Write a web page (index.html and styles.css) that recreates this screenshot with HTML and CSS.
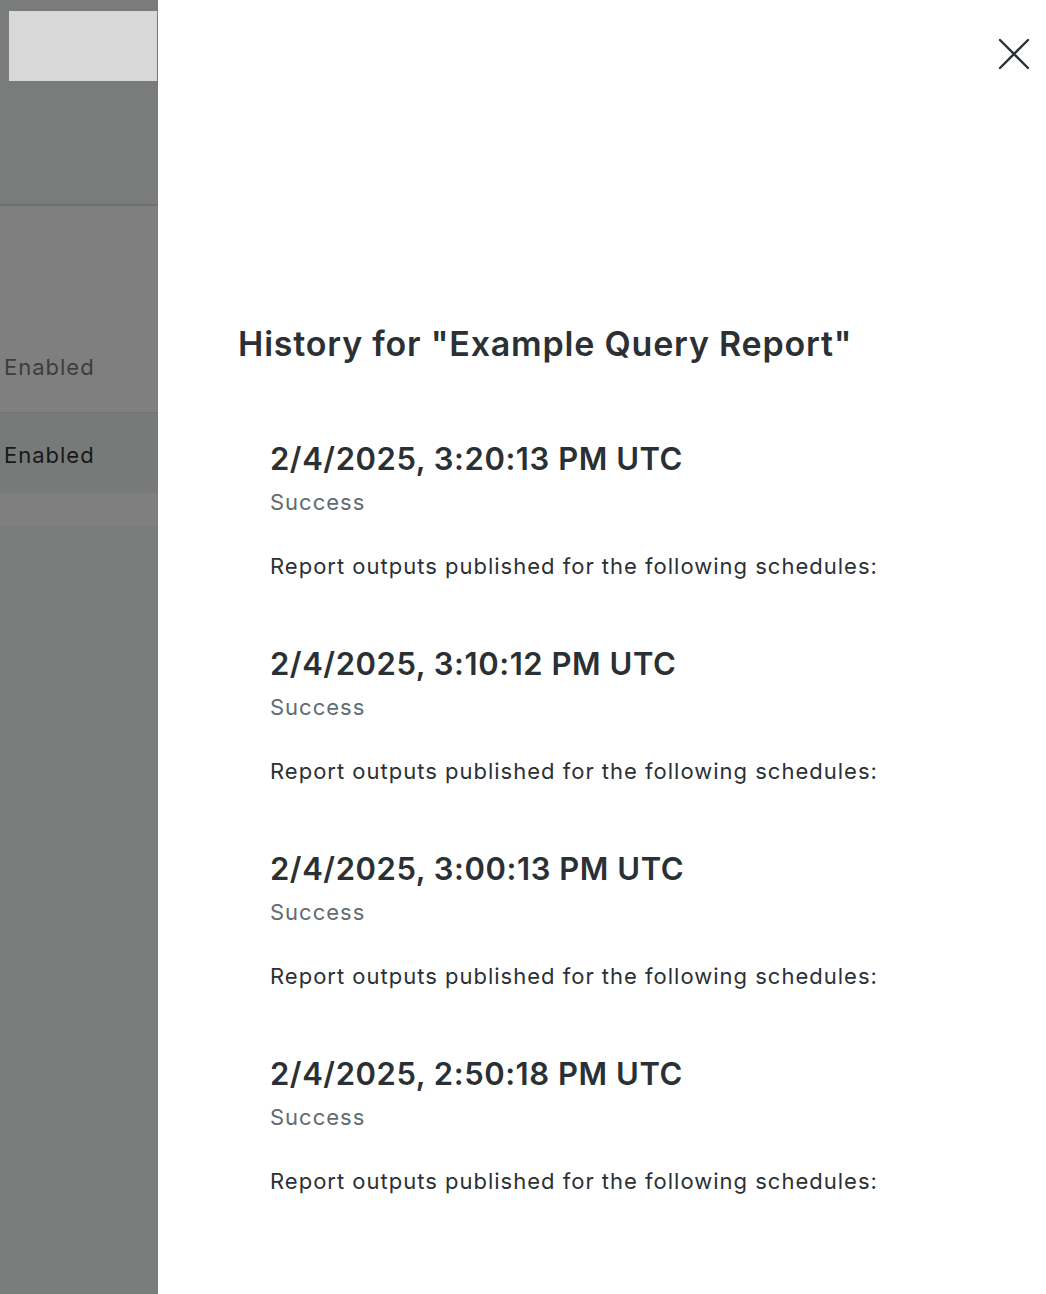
FILE: index.html
```html
<!DOCTYPE html>
<html lang="en">
<head>
<meta charset="utf-8">
<title>History</title>
<link rel="stylesheet" href="styles.css">
</head>
<body>
<div class="page">
  <aside class="backdrop">
    <div class="bg-header">
      <div class="bg-button"></div>
    </div>
    <div class="bg-row bg-row-first">
      <span class="bg-muted">Enabled</span>
    </div>
    <div class="bg-row bg-row-second">
      <span class="bg-strong">Enabled</span>
    </div>
    <div class="bg-band"></div>
    <div class="bg-rest"></div>
  </aside>
  <main class="drawer">
    <div class="drawer-top">
      <button class="close" aria-label="Close">
        <svg width="32" height="32" viewBox="0 0 32 32" fill="none" stroke="#2b3035" stroke-width="2.4" stroke-linecap="round">
          <path d="M2 2 L30 30 M30 2 L2 30"/>
        </svg>
      </button>
    </div>
    <h1 class="title">History for "Example Query Report"</h1>
    <ul class="entries">
      <li class="entry">
        <h2 class="entry-time">2/4/2025, 3:20:13 PM UTC</h2>
        <div class="entry-status">Success</div>
        <p class="entry-desc">Report outputs published for the following schedules:</p>
      </li>
      <li class="entry">
        <h2 class="entry-time">2/4/2025, 3:10:12 PM UTC</h2>
        <div class="entry-status">Success</div>
        <p class="entry-desc">Report outputs published for the following schedules:</p>
      </li>
      <li class="entry">
        <h2 class="entry-time">2/4/2025, 3:00:13 PM UTC</h2>
        <div class="entry-status">Success</div>
        <p class="entry-desc">Report outputs published for the following schedules:</p>
      </li>
      <li class="entry">
        <h2 class="entry-time">2/4/2025, 2:50:18 PM UTC</h2>
        <div class="entry-status">Success</div>
        <p class="entry-desc">Report outputs published for the following schedules:</p>
      </li>
    </ul>
  </main>
</div>
</body>
</html>
```
FILE: styles.css
```css
* { box-sizing: border-box; }
html, body { margin: 0; padding: 0; }
body {
  font-family: Inter, "Noto Sans", sans-serif;
  background: #ffffff;
  color: #2b3035;
}
.page {
  display: flex;
  width: 1046px;
  height: 1294px;
  overflow: hidden;
}
.backdrop {
  width: 158px;
  flex: none;
  display: flex;
  flex-direction: column;
  background: #7a7c7b;
}
.bg-header {
  height: 206px;
  padding: 11px 1px 0 9px;
  border-bottom: 2px solid #6e706f;
}
.bg-button {
  height: 70px;
  background: #d8d8d8;
}
.bg-row {
  display: flex;
  align-items: center;
  padding-left: 4px;
  font-size: 22px;
  letter-spacing: 1px;
}
.bg-row-first {
  height: 207px;
  background: #7f7f7f;
  padding-top: 116px;
  border-bottom: 1px solid #727473;
}
.bg-row-first .bg-muted { color: #3a3e41; }
.bg-row-second {
  height: 80px;
  padding-top: 3px;
  background: #787a79;
}
.bg-strong { color: #16191b; }
.bg-band {
  height: 33px;
  background: #7f7f7f;
}
.bg-rest { flex: 1; }

.drawer {
  flex: 1;
  padding: 0 0 0 80px;
}
.drawer-top {
  display: flex;
  justify-content: flex-end;
  height: 290px;
  padding: 38px 16px 0 0;
}
.close {
  width: 32px;
  height: 32px;
  padding: 0;
  border: 0;
  background: none;
  display: flex;
}
.title {
  margin: 34px 0 0;
  font-size: 34px;
  font-weight: 600;
  line-height: 40px;
  color: #2b3035;
  letter-spacing: 0.8px;
}
.entries {
  list-style: none;
  margin: 0;
  padding: 0 0 0 32px;
}
.entry { margin-top: 64px; }
.entry:first-child { margin-top: 76px; }
.entry-time {
  margin: 0;
  font-size: 31px;
  font-weight: 600;
  line-height: 38px;
  color: #2b3035;
  letter-spacing: 0.55px;
}
.entry-status {
  margin-top: 9px;
  font-size: 22px;
  line-height: 30px;
  color: #626b72;
  letter-spacing: 1px;
}
.entry-desc {
  margin: 34px 0 0;
  font-size: 22px;
  line-height: 30px;
  color: #2b3035;
  letter-spacing: 1px;
}
```
